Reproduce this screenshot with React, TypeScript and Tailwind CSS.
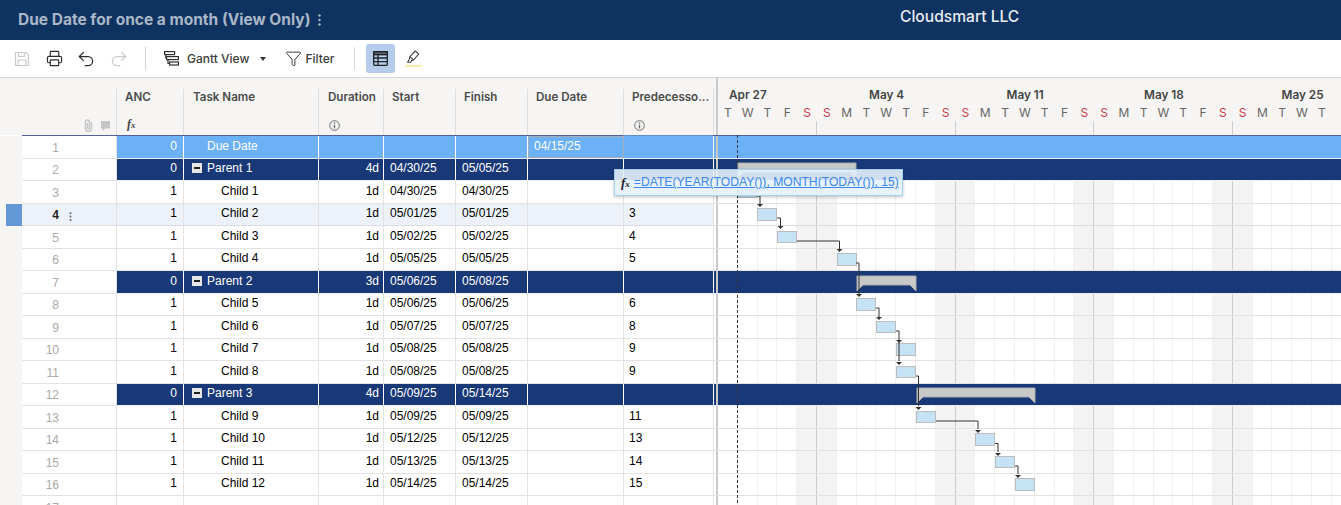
import React from "react";
import { Printer, Undo2, Redo2, Funnel } from "lucide-react";

const sans = "font-['Liberation_Sans',Arial,sans-serif]";
const ui = "font-['Inter',sans-serif]";

type Kind = "child" | "parent" | "due" | "empty";
type Row = { n: number; kind: Kind; anc?: string; name?: string; dur?: string; start?: string; finish?: string; due?: string; pred?: string };

const child = (n: number, i: number, dur: string, d: string, pred: string): Row => ({ n, kind: "child", anc: "1", name: `Child ${i}`, dur, start: d, finish: d, pred });
const parent = (n: number, i: number, dur: string, s: string, f: string): Row => ({ n, kind: "parent", anc: "0", name: `Parent ${i}`, dur, start: s, finish: f });

const rows: Row[] = [
  { n: 1, kind: "due", anc: "0", name: "Due Date", due: "04/15/25" },
  parent(2, 1, "4d", "04/30/25", "05/05/25"),
  child(3, 1, "1d", "04/30/25", ""),
  child(4, 2, "1d", "05/01/25", "3"),
  child(5, 3, "1d", "05/02/25", "4"),
  child(6, 4, "1d", "05/05/25", "5"),
  parent(7, 2, "3d", "05/06/25", "05/08/25"),
  child(8, 5, "1d", "05/06/25", "6"),
  child(9, 6, "1d", "05/07/25", "8"),
  child(10, 7, "1d", "05/08/25", "9"),
  child(11, 8, "1d", "05/08/25", "9"),
  parent(12, 3, "4d", "05/09/25", "05/14/25"),
  child(13, 9, "1d", "05/09/25", "11"),
  child(14, 10, "1d", "05/12/25", "13"),
  child(15, 11, "1d", "05/13/25", "14"),
  child(16, 12, "1d", "05/14/25", "15"),
  { n: 17, kind: "empty" },
];

const dayLetters = "TWTFSSMTWTFSSMTWTFSSMTWTFSSMTWT".split("");
const days = Array.from({ length: 32 }, (_, i) => i);
const isWeekend = (i: number) => i % 7 === 4 || i % 7 === 5;

// bars: left/top/width/height in chart coordinates (chart starts at x=718, y=135)
const bars = [
  [20, 51, 19, 12],
  [39, 73, 20, 13],
  [59, 96, 20, 12],
  [119, 118, 20, 13],
  [138, 163, 20, 13],
  [158, 186, 20, 12],
  [178, 208, 20, 13],
  [178, 231, 20, 12],
  [198, 276, 20, 12],
  [257, 298, 20, 13],
  [277, 321, 20, 12],
  [297, 343, 20, 13],
];

const links = [
  "M39 61H42V69",
  "M59 83H62.5V91",
  "M79 106H121.5V114",
  "M138 128H141V159",
  "M158 173H161V182",
  "M178 196H181V226",
  "M198 241H200.5V271",
  "M218 286H260V294",
  "M277 308.5H280V317",
  "M297 331H300V339",
];
const heads: [number, number][] = [[42, 69], [62.5, 91], [121.5, 114], [141, 159], [161, 182], [181, 205], [181, 227], [200.5, 272], [260, 295], [280, 318], [300, 340]];

const summary = (x: number, w: number, y: number) =>
  `M${x} ${y}H${x + w}V${y + 15}L${x + w - 6} ${y + 9}H${x + 6}L${x} ${y + 15}Z`;

function Save() {
  return (
    <svg width="16" height="16" viewBox="0 0 16 16" fill="none" stroke="#c9c9c9" strokeWidth="1.2">
      <path d="M1.5 1.5H12L14.5 4V14.5H1.5Z" />
      <path d="M4.5 1.5V5.5H10.5V1.5M4 14.5V9H12V14.5" />
    </svg>
  );
}

function GanttIcon() {
  return (
    <svg width="15" height="15" viewBox="0 0 15 15" fill="none" stroke="#333" strokeWidth="1.2">
      <rect x="0.6" y="0.6" width="10" height="3" />
      <rect x="2.6" y="5.6" width="11.8" height="3" />
      <rect x="5.6" y="11" width="8.8" height="3" />
      <path d="M1.8 3.6V7H2.6M4 8.6V12.5H5.6" />
    </svg>
  );
}

function GridIcon() {
  return (
    <svg width="15" height="15" viewBox="0 0 15 15" fill="none" stroke="#1f2328" strokeWidth="1.3">
      <rect x="0.7" y="0.7" width="13.6" height="13.6" rx="0.8" />
      <rect x="0.7" y="0.7" width="13.6" height="3" fill="#5b6168" />
      <path d="M0.7 7H14.3M0.7 10.6H14.3M5 3.7V14.3" />
    </svg>
  );
}

function Pen() {
  return (
    <svg width="14" height="14" viewBox="0 0 14 14" fill="none" stroke="#444" strokeWidth="1.1" strokeLinejoin="round">
      <path d="M9.3 1L12.8 4.2L7.4 10L3.9 6.7Z" />
      <path d="M3.9 6.7L3.4 9L1.6 12.2L4.8 12.2L5.4 10.6L7.4 10" />
    </svg>
  );
}

function InfoIcon() {
  return (
    <svg width="11" height="11" viewBox="0 0 11 11" fill="none" stroke="#6f6f6f" strokeWidth="1">
      <circle cx="5.5" cy="5.5" r="4.8" />
      <path d="M5.5 4.6V8.4" strokeWidth="1.4" />
      <path d="M5.5 2.4V3.7" strokeWidth="1.4" />
    </svg>
  );
}

function Fx({ cls }: { cls: string }) {
  return (
    <span className={`font-['Liberation_Serif',serif] italic font-bold leading-none ${cls}`}>
      f<span className="text-[9px]">x</span>
    </span>
  );
}

function Head({ w, title, sub, left }: { w: string; title: string; sub?: React.ReactNode; left: string }) {
  return (
    <div className={`${w} shrink-0 h-full border-r border-[#dedede] relative`}>
      <div className={`${ui} absolute ${left} top-0 text-[11.6px] font-semibold text-[#4a4a4a] leading-[16px] whitespace-nowrap`}>{title}</div>
      {sub && <div className="absolute left-[10px] bottom-[4px] h-[11px] flex items-center">{sub}</div>}
    </div>
  );
}

function Cell({ w, kind, align, children, extra }: { w: string; kind: Kind; align?: string; children?: React.ReactNode; extra?: string }) {
  const border = extra ? extra : kind === "child" || kind === "empty" ? "border-r border-[#e2e2e2]" : "border-r border-white";
  return (
    <div className={`${w} shrink-0 h-full ${border} flex items-center pb-[2px] ${align ?? ""}`}>
      {children}
    </div>
  );
}

function TableRow({ r }: { r: Row }) {
  const selected = r.n === 4;
  const fill =
    r.kind === "parent" ? "bg-[#183878] text-white" :
    r.kind === "due" ? "bg-[#6cb1f5] text-white" : "";
  const bg = fill || (selected ? "bg-[#edf2fa] text-black" : "bg-white text-black");
  const rowBorder = r.kind === "parent" || r.kind === "due" ? "border-[#eef2f7]" : selected ? "border-[#d8dde6]" : "border-[#e2e2e2]";
  return (
    <div className={`flex h-[22.5px] ${sans} text-[12px]`}>
      <div className="w-[22px] shrink-0 h-full bg-[#f6f5f3] flex justify-end">
        {selected && <div className="w-4 h-full bg-[#6497d6]" />}
      </div>
      <div className={`w-[95px] shrink-0 h-full border-r border-b border-[#e2e2e2] flex items-center pt-[2px] relative ${selected ? "bg-[#edf2fa]" : "bg-white"}`}>
        <span className={`w-[37px] text-right ${selected ? "text-[#222] font-bold" : "text-[#a9a9a9]"}`}>{r.n}</span>
        {selected && (
          <svg className="absolute left-[47px] top-[8px]" width="3" height="10" viewBox="0 0 3 10" fill="#666">
            <circle cx="1.5" cy="1.2" r="1" /><circle cx="1.5" cy="4.6" r="1" /><circle cx="1.5" cy="8" r="1" />
          </svg>
        )}
      </div>
      <div className={`flex h-full border-b ${rowBorder} ${bg}`}>
        <Cell w="w-[67px]" kind={r.kind} align="justify-end pr-[6px]">{r.anc}</Cell>
        <Cell w="w-[135px]" kind={r.kind}>
          {r.kind === "parent" && (
            <span className="ml-[8px] w-[10px] h-[10px] bg-[#e6e6e6] flex items-center justify-center mr-[5px]">
              <span className="w-[6px] h-[2px] bg-[#222]" />
            </span>
          )}
          {r.kind === "due" && <span className="ml-[23px]">{r.name}</span>}
          {r.kind === "parent" && <span>{r.name}</span>}
          {r.kind === "child" && <span className="ml-[37px]">{r.name}</span>}
        </Cell>
        <Cell w="w-[65px]" kind={r.kind} align="justify-end pr-[4px]">{r.dur}</Cell>
        <Cell w="w-[72px]" kind={r.kind} align="pl-[6px]">{r.start}</Cell>
        <Cell w="w-[72px]" kind={r.kind} align="pl-[6px]">{r.finish}</Cell>
        <Cell w="w-[96px]" kind={r.kind} align={r.kind === "due" ? "pl-[5px]" : "pl-[6px]"} extra={r.kind === "due" ? "border border-[#a3adba]" : ""}>{r.due}</Cell>
        <Cell w="w-[90px]" kind={r.kind} align="pl-[5px]">{r.pred}</Cell>
      </div>
      <div className={`w-[4px] shrink-0 h-full flex border-b ${rowBorder}`}>
        <div className={`w-[2px] h-full ${r.kind === "parent" ? "bg-[#183878]" : r.kind === "due" ? "bg-[#6cb1f5]" : "bg-white"}`} />
        <div className="w-[2px] h-full bg-[#c9c9c9]" />
      </div>
      <div className={`flex h-full border-b flex-1 overflow-hidden ${rowBorder} ${fill || "bg-white"}`}>
        {(r.kind === "child" || r.kind === "empty") &&
          days.map((i) => (
            <div
              key={i}
              className={`w-[19.8px] shrink-0 h-full border-r ${i % 7 === 4 ? "border-[#cdcdcd]" : "border-[#f1f1f1]"} ${isWeekend(i) ? "bg-[#f3f3f3]" : ""}`}
            />
          ))}
      </div>
    </div>
  );
}

export default function App() {
  return (
    <div className="w-[1341px] h-[505px] overflow-hidden bg-white flex flex-col">
      <header className={`h-10 shrink-0 bg-[#0f3360] flex items-center relative ${ui}`}>
        <div className="ml-[18px] text-[15.5px] font-bold text-[#a9b7c8] leading-none whitespace-nowrap">Due Date for once a month (View Only)</div>
        <svg className="ml-[7px]" width="3" height="12" viewBox="0 0 3 12" fill="#a9b7c8">
          <circle cx="1.5" cy="1.5" r="1.2" /><circle cx="1.5" cy="6" r="1.2" /><circle cx="1.5" cy="10.5" r="1.2" />
        </svg>
        <div className="absolute left-[900px] top-[7px] text-[15.6px] font-medium text-[#e8edf3] leading-[20px] whitespace-nowrap">Cloudsmart LLC</div>
      </header>

      <div className={`h-[38px] shrink-0 bg-white border-b border-[#d6d6d6] flex items-center ${ui} text-[12px] text-[#3c3c3c]`}>
        <div className="ml-[14px] w-4 flex"><Save /></div>
        <Printer className="ml-[16px]" size={17} strokeWidth={1.6} color="#2d2d2d" />
        <Undo2 className="ml-[13px]" size={20} strokeWidth={1.5} color="#2d2d2d" />
        <Redo2 className="ml-[13px]" size={20} strokeWidth={1.5} color="#c9c9c9" />
        <div className="ml-[16px] w-[1px] h-[23px] bg-[#cfcfcf]" />
        <div className="ml-[18px]"><GanttIcon /></div>
        <span className="ml-[8px] font-medium">Gantt View</span>
        <svg className="ml-[11px]" width="6" height="4" viewBox="0 0 6 4" fill="#333"><path d="M0 0H6L3 4Z" /></svg>
        <Funnel className="ml-[19px]" size={17} strokeWidth={1.3} color="#2d2d2d" />
        <span className="ml-[3px] font-medium">Filter</span>
        <div className="ml-[20px] w-[1px] h-[23px] bg-[#d8d8d8]" />
        <div className="ml-[11px] w-[29px] h-[29px] rounded-[3px] bg-[#b5cdea] flex items-center justify-center"><GridIcon /></div>
        <div className="ml-[10px] flex flex-col items-center gap-[1px]">
          <Pen />
          <div className="w-[16px] h-[2px] bg-[#f7e9a8]" />
        </div>
      </div>

      <div className={`h-[57px] shrink-0 bg-[#f6f5f3] flex relative ${ui}`}>
        <div className="w-[117px] shrink-0 pt-[11px] h-full">
          <div className="h-[46px] border-r border-[#dedede] flex items-end justify-end gap-[6px] pr-[5px] pb-[3px] ml-[22px]">
            <svg width="11" height="13" viewBox="0 0 11 13" fill="none" stroke="#c4c4c4" strokeWidth="1.4"><path d="M8.5 3V9.5A3 3 0 0 1 2.5 9.5V3A2 2 0 0 1 6.5 3V9A1 1 0 0 1 4.5 9V4" /></svg>
            <svg width="11" height="12" viewBox="0 0 11 12" fill="#c4c4c4"><path d="M1 1H10V8.5H5L2.5 11V8.5H1Z" /></svg>
          </div>
        </div>
        <div className="flex pt-[11px] h-full">
          <Head w="w-[67px]" left="left-[8px]" title="ANC" sub={<span className="mb-[3px] flex"><Fx cls="text-[12px] text-[#444]" /></span>} />
          <Head w="w-[135px]" left="left-[9px]" title="Task Name" />
          <Head w="w-[65px]" left="left-[9px]" title="Duration" sub={<InfoIcon />} />
          <Head w="w-[72px]" left="left-[8px]" title="Start" />
          <Head w="w-[72px]" left="left-[8px]" title="Finish" />
          <Head w="w-[96px]" left="left-[8px]" title="Due Date" />
          <Head w="w-[90px]" left="left-[8px]" title="Predecesso..." sub={<InfoIcon />} />
        </div>
        <div className="w-[4px] shrink-0 h-full flex">
          <div className="w-[2px] h-full" />
          <div className="w-[2px] h-full bg-[#c9c9c9]" />
        </div>
        <div className="flex-1 overflow-hidden relative">
          <div className="flex h-[26px] items-end pb-[1px]">
            {["Apr 27", "May 4", "May 11", "May 18", "May 25"].map((m, i) => (
              <div key={m} className={`shrink-0 text-[11.8px] font-semibold text-[#444] leading-[16px] whitespace-nowrap ${i === 0 ? "w-[140px] pl-[11px]" : "w-[137.5px] pl-[11px]"}`}>{m}</div>
            ))}
          </div>
          <div className="flex h-[17px] items-center">
            {dayLetters.map((d, i) => (
              <div key={i} className={`w-[19.8px] shrink-0 text-center text-[12px] leading-none ${isWeekend(i) ? "text-[#c8404f]" : "text-[#666]"}`}>{d}</div>
            ))}
          </div>
          <div className="flex h-[14px]">
            {days.map((i) => (
              <div key={i} className={`w-[19.8px] shrink-0 h-full ${i % 7 === 4 ? "border-r border-[#cdcdcd]" : ""}`} />
            ))}
          </div>
        </div>
      </div>

      <div className="relative flex-1 overflow-hidden">
        <div className="h-[1px] ml-[22px] bg-[#4f6197]" />
        <div className="absolute left-[623px] top-[-2px] w-[90px] h-[3px] bg-[#5f8ccb]" />
        {rows.map((r) => <TableRow key={r.n} r={r} />)}

        {/* chart layer */}
        <div className="absolute left-[718px] top-0 right-0 bottom-0 overflow-hidden pointer-events-none">
          {bars.map(([x, y, w, h], i) => (
            <div
              key={i}
              className="absolute bg-[#c6e2f5] border border-[#bcbcbc]"
              style={{ left: x, top: y, width: w, height: h }}
            />
          ))}
          <svg className="absolute left-0 top-0" width="623" height="370" viewBox="0 0 623 370" fill="none">
            <path d="M19.5 0V370" stroke="#333" strokeDasharray="3 2" />
            <path d={summary(20, 118, 28)} fill="#c9c9c9" stroke="#aaaaaa" />
            <path d={summary(139, 59, 141)} fill="#c9c9c9" stroke="#aaaaaa" />
            <path d={summary(199, 118, 253)} fill="#c9c9c9" stroke="#aaaaaa" />
            {links.map((d, i) => <path key={i} d={d} stroke="#333" strokeWidth="1" />)}
            {heads.map(([x, y], i) => <path key={i} d={`M${x - 3} ${y}H${x + 3}L${x} ${y + 3}Z`} fill="#333" />)}
          </svg>
        </div>

        {/* formula tooltip */}
        <div className="absolute left-[614px] top-[34px] w-[289px] h-[27px] bg-[#e4f1fb]/90 border border-[#a5d2f0] shadow-[0_1px_3px_rgba(0,0,0,0.25)] flex items-center pl-[6px] gap-[2px]">
          <Fx cls="text-[13px] text-[#222]" />
          <span className={`${sans} text-[12.15px] text-[#3b87ee] underline whitespace-nowrap ml-[2px]`}>=DATE(YEAR(TODAY()), MONTH(TODAY()), 15)</span>
        </div>
      </div>
    </div>
  );
}
